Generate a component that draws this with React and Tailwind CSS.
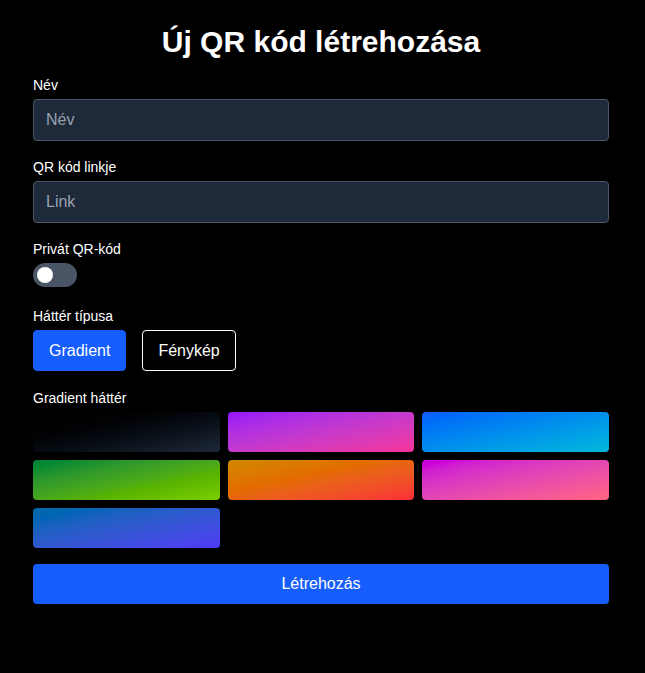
import React, { useState } from 'react';

const gradients = [
  'bg-gradient-to-br from-black to-gray-800',
  'bg-gradient-to-br from-purple-600 to-pink-500',
  'bg-gradient-to-br from-blue-600 to-cyan-500',
  'bg-gradient-to-br from-green-700 to-lime-500',
  'bg-gradient-to-br from-yellow-600 to-red-500',
  'bg-gradient-to-br from-fuchsia-600 to-rose-400',
  'bg-gradient-to-br from-sky-700 to-indigo-600',
];

export default function App() {
  const [isPrivate, setIsPrivate] = useState(false);
  const [bgType, setBgType] = useState('gradient');

  return (
    <div className="min-h-screen bg-black text-white font-['Liberation_Sans',Arial,sans-serif]">
      <div className="w-[576px] ml-[33px] pt-6">
        <h1 className="text-3xl font-bold text-center mb-[15px]">Új QR kód létrehozása</h1>

        {/* Name */}
        <div className="mb-4">
          <label className="block text-sm mb-1">Név</label>
          <input
            placeholder="Név"
            className="w-full h-[42px] px-3 bg-gray-800 border border-gray-600 rounded text-base text-white placeholder-gray-400 outline-none"
          />
        </div>

        {/* Link */}
        <div className="mb-4">
          <label className="block text-sm mb-1">QR kód linkje</label>
          <input
            placeholder="Link"
            className="w-full h-[42px] px-3 bg-gray-800 border border-gray-600 rounded text-base text-white placeholder-gray-400 outline-none"
          />
        </div>

        {/* Private toggle */}
        <div className="mb-[19px]">
          <label className="block text-sm mb-1">Privát QR-kód</label>
          <button
            onClick={() => setIsPrivate(!isPrivate)}
            className={`relative block w-11 h-6 rounded-full ${isPrivate ? 'bg-blue-600' : 'bg-gray-600'}`}
          >
            <span
              className={`absolute top-1 w-4 h-4 rounded-full bg-white ${isPrivate ? 'left-6' : 'left-1'}`}
            />
          </button>
        </div>

        {/* Background type */}
        <div className="mb-[17px]">
          <label className="block text-sm mb-1">Háttér típusa</label>
          <div className="flex gap-4">
            <button
              onClick={() => setBgType('gradient')}
              className={`h-[41px] px-[15px] rounded border text-base ${bgType === 'gradient' ? 'bg-blue-600 border-blue-600' : 'border-white'}`}
            >
              Gradient
            </button>
            <button
              onClick={() => setBgType('photo')}
              className={`h-[41px] px-[15px] rounded border text-base ${bgType === 'photo' ? 'bg-blue-600 border-blue-600' : 'border-white'}`}
            >
              Fénykép
            </button>
          </div>
        </div>

        {/* Gradient picker */}
        <div className="mb-4">
          <label className="block text-sm mb-1">Gradient háttér</label>
          <div className="grid grid-cols-3 gap-2">
            {gradients.map((g, i) => (
              <div key={i} className={`h-10 rounded ${g}`} />
            ))}
          </div>
        </div>

        <button className="w-full h-10 bg-blue-600 rounded text-base">Létrehozás</button>
      </div>
    </div>
  );
}
